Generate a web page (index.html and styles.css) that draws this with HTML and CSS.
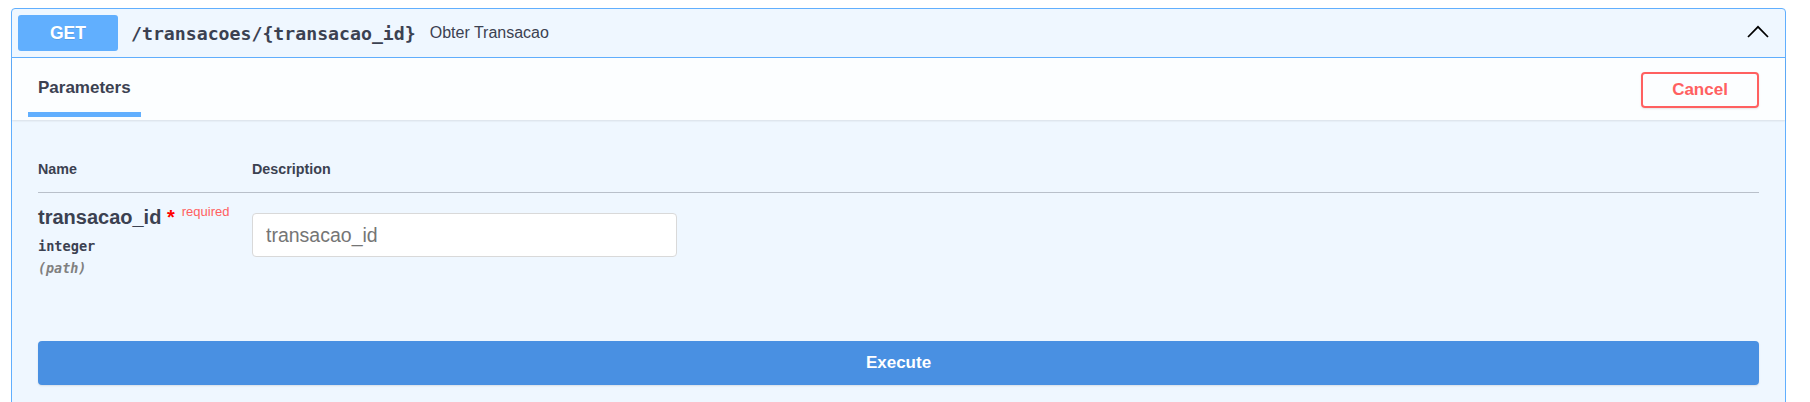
FILE: index.html
```html
<!DOCTYPE html>
<html lang="pt">
<head>
<meta charset="utf-8">
<title>Obter Transacao</title>
<link rel="stylesheet" href="styles.css">
</head>
<body>
<div class="opblock">
  <div class="summary">
    <span class="method">GET</span>
    <span class="path">/transacoes/{transacao_id}</span>
    <span class="desc">Obter Transacao</span>
    <svg class="arrow" width="22" height="13" viewBox="0 0 22 13" aria-hidden="true">
      <polyline points="1,12 11,1.8 21,12" fill="none" stroke="#000" stroke-width="1.7"/>
    </svg>
  </div>
  <div class="tab-header">
    <div class="tab">
      <span class="tab-title">Parameters</span>
      <span class="tab-line"></span>
    </div>
    <button class="cancel">Cancel</button>
  </div>
  <div class="params">
    <div class="thead">
      <span>Name</span>
      <span>Description</span>
    </div>
    <div class="prow">
      <div class="pname-cell">
        <div class="pname">transacao_id&nbsp;<span class="star">*</span><span class="req">required</span></div>
        <div class="ptype">integer</div>
        <div class="pin">(path)</div>
      </div>
      <div class="pdesc-cell">
        <input class="pinput" type="text" placeholder="transacao_id">
      </div>
    </div>
    <div class="exec-wrap">
      <button class="execute">Execute</button>
    </div>
  </div>
</div>
</body>
</html>
```

FILE: styles.css
```css
html, body {
  margin: 0;
  background: #fff;
}
body {
  padding: 8px 24px 0 11px;
  font-family: "Liberation Sans", Arial, sans-serif;
  color: #3b4151;
  overflow: hidden;
}
.opblock {
  border: 1px solid #61affe;
  border-radius: 4px;
  background: #eff7ff;
  padding-bottom: 60px;
}
.summary {
  display: flex;
  align-items: center;
  padding: 6px 16px 6px 6px;
  border-bottom: 1px solid #61affe;
}
.method {
  width: 100px;
  height: 36px;
  display: flex;
  align-items: center;
  justify-content: center;
  background: #61affe;
  border-radius: 3px;
  color: #fff;
  font-weight: 700;
  font-size: 17.5px;
  text-shadow: 0 1px 0 rgba(0,0,0,.1);
}
.path {
  margin-left: 13px;
  font-family: "DejaVu Sans Mono", "Liberation Mono", monospace;
  font-weight: 700;
  font-size: 18.2px;
  color: #3b4151;
}
.desc {
  margin-left: 14px;
  font-size: 16px;
  color: #3b4151;
}
.arrow {
  margin-left: auto;
  margin-top: -4px;
}
.tab-header {
  display: flex;
  align-items: center;
  justify-content: space-between;
  height: 62px;
  padding: 0 26px;
  background: rgba(255,255,255,.8);
  box-shadow: 0 1px 2px rgba(0,0,0,.1);
}
.tab {
  align-self: stretch;
  display: flex;
  flex-direction: column;
  align-items: center;
  padding-top: 20px;
}
.tab-title {
  font-size: 17px;
  font-weight: 700;
  line-height: 20px;
}
.tab-line {
  align-self: stretch;
  height: 5px;
  margin: 14px -10px 0 -10px;
  background: #61affe;
}
.cancel {
  width: 118px;
  height: 36px;
  margin-top: 1px;
  border: 2px solid #ff6060;
  border-radius: 4px;
  background: transparent;
  color: #ff6060;
  font-family: "Liberation Sans", Arial, sans-serif;
  font-weight: 700;
  font-size: 17px;
  box-shadow: 0 1px 2px rgba(0,0,0,.1);
}
.params {
  padding: 41px 26px 0;
}
.thead {
  display: grid;
  grid-template-columns: 214px 1fr;
  font-size: 14.3px;
  font-weight: 700;
  line-height: 17px;
  padding-bottom: 14px;
  border-bottom: 1px solid rgba(59,65,81,.3);
}
.prow {
  display: grid;
  grid-template-columns: 214px 1fr;
  padding-top: 13px;
}
.pname {
  font-size: 20px;
  font-weight: 700;
  line-height: 23px;
  white-space: nowrap;
}
.star {
  color: #f00;
}
.req {
  font-size: 13px;
  font-weight: 400;
  line-height: 0;
  color: #ff6060;
  padding-left: 7px;
  vertical-align: 8px;
}
.ptype {
  margin-top: 9px;
  font-family: "DejaVu Sans Mono", "Liberation Mono", monospace;
  font-weight: 700;
  font-size: 13.6px;
  line-height: 16px;
}
.pin {
  margin-top: 7px;
  font-family: "DejaVu Sans Mono", "Liberation Mono", monospace;
  font-weight: 700;
  font-style: italic;
  font-size: 13.4px;
  line-height: 16px;
  color: #808080;
}
.pinput {
  display: block;
  box-sizing: border-box;
  width: 425px;
  height: 44px;
  margin-top: 7px;
  padding: 0 13px;
  border: 1px solid #d9d9d9;
  border-radius: 4px;
  background: #fff;
  font-family: "Liberation Sans", Arial, sans-serif;
  font-size: 19.5px;
  color: #3b4151;
}
.pinput::placeholder {
  color: #757575;
}
.exec-wrap {
  padding-top: 64px;
}
.execute {
  display: block;
  width: 100%;
  height: 44px;
  border: none;
  border-radius: 4px;
  background: #4990e2;
  color: #fff;
  font-family: "Liberation Sans", Arial, sans-serif;
  font-weight: 700;
  font-size: 17px;
  box-shadow: 0 1px 2px rgba(0,0,0,.1);
}
```
